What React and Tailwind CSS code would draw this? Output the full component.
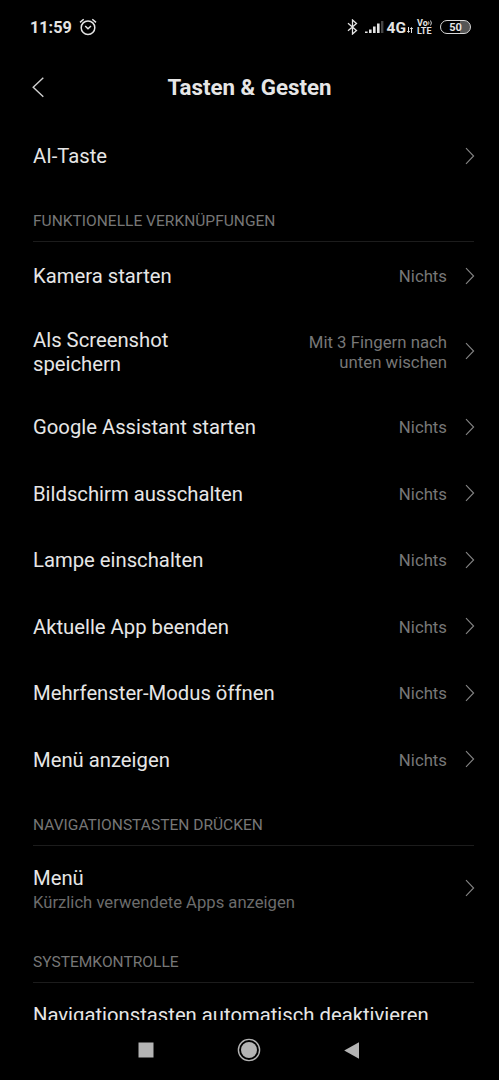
import React from "react";

const shortcuts = [
  { title: "Kamera starten", value: "Nichts" },
  { title: "Als Screenshot speichern", value: "Mit 3 Fingern nach unten wischen", tall: true },
  { title: "Google Assistant starten", value: "Nichts" },
  { title: "Bildschirm ausschalten", value: "Nichts" },
  { title: "Lampe einschalten", value: "Nichts" },
  { title: "Aktuelle App beenden", value: "Nichts" },
  { title: "Mehrfenster-Modus öffnen", value: "Nichts" },
  { title: "Menü anzeigen", value: "Nichts" },
];

const Chevron = () => (
  <svg className="-mr-px mb-px h-[18px] w-[10px] shrink-0" viewBox="0 0 10 18" fill="none" stroke="#858585" strokeWidth="1.1">
    <path d="M1 1.2 8.6 9 1 16.8" />
  </svg>
);

function Row({ title, value, subtitle, tall, arrow = true }) {
  return (
    <div className={`flex shrink-0 items-center ${tall || subtitle ? "h-[84.5px]" : "h-[66.45px]"}`}>
      <div className={`flex-1 ${subtitle ? "pt-1" : tall ? "pt-px" : ""}`}>
        <p className={`text-[20.25px] leading-6 text-[#e6e6e6] ${tall ? "max-w-[160px]" : "whitespace-nowrap"}`}>{title}</p>
        {subtitle && <p className="mt-px text-[16.65px] leading-6 text-[#6c6c6c]">{subtitle}</p>}
      </div>
      {value && <p className="mr-[18px] max-w-[142px] text-right text-[16.75px] leading-5 text-[#777]">{value}</p>}
      {arrow && <Chevron />}
    </div>
  );
}

function SectionTitle({ children }) {
  return <h2 className="h-[53px] shrink-0 border-b border-[#1c1c1c] pt-[22px] text-[15.55px] leading-5 text-[#767676]">{children}</h2>;
}

function StatusBar() {
  return (
    <div className="flex h-[54px] shrink-0 items-center pr-[28px] pl-[30px] text-[#e4e4e4]">
      <span className="pt-px text-[16.2px] leading-5 font-bold">11:59</span>
      <svg className="ml-[7px] h-[18px] w-[18px]" viewBox="0 0 18 18" fill="none" stroke="currentColor" strokeWidth="1.5">
        <circle cx="9" cy="9.7" r="6.8" />
        <path d="M1 4.4 4.7 1.2M17 4.4 13.3 1.2M6.2 8 9 10.7 12 8" />
      </svg>
      <div className="ml-auto flex items-center">
        <svg className="h-4 w-[11px]" viewBox="0 0 11 16" fill="none" stroke="currentColor" strokeWidth="1.3">
          <path d="M1 4.2 9.5 11.4 5.5 15V1L9.5 4.6 1 11.8" />
        </svg>
        <svg className="ml-[7px] h-[14px] w-[19px]" viewBox="0 0 19 14" fill="currentColor">
          <path d="M0 11.5h2.6V13H0zM4 9.5h2.6V13H4zM8 6.5h2.6V13H8zM12 3.5h2.6V13H12z" />
          <path d="M16 1h2.4v12H16z" opacity=".3" />
        </svg>
        <span className="ml-[3px] pt-px text-[15.5px] leading-5 font-bold">4G</span>
        <svg className="mt-[6px] ml-px h-[6px] w-[6px]" viewBox="0 0 6 6" fill="none" stroke="currentColor" strokeWidth="1">
          <path d="M1.5 0v5M.3 4l1.2 1.5L2.7 4M4.5 6V1M3.3 2 4.5.5 5.7 2" />
        </svg>
        <div className="ml-[4px] flex w-4 flex-col text-[9px] leading-[8px] font-bold">
          <span className="flex items-center">
            Vo
            <svg className="h-[6px] w-[5px]" viewBox="0 0 5 6" fill="none" stroke="currentColor" strokeWidth=".9">
              <path d="M.5 1.5q1 1.5 0 3M2.5.5q1.8 2.5 0 5" />
            </svg>
          </span>
          <span>LTE</span>
        </div>
        <div className="ml-[7px] flex h-[14px] w-[31px] items-center justify-center rounded-full border-[1.5px] border-[#d8d8d8] bg-linear-to-r from-black from-65% to-[#555] to-65% text-[11px] leading-none font-bold">50</div>
      </div>
    </div>
  );
}

function NavigationBar() {
  return (
    <div className="flex h-[60px] shrink-0 items-center justify-between pr-[139px] pl-[138px] text-[#b4b4b4]">
      <svg className="h-4 w-4" viewBox="0 0 16 16" fill="currentColor">
        <path d="M.5.5h15v15H.5z" />
      </svg>
      <svg className="h-6 w-6" viewBox="0 0 24 24" fill="none" stroke="currentColor">
        <circle cx="12" cy="12" r="10.6" strokeWidth="1.4" />
        <circle cx="12" cy="12" r="8" fill="currentColor" stroke="none" />
      </svg>
      <svg className="h-[17px] w-4" viewBox="0 0 16 17" fill="currentColor">
        <path d="M15 .3v16.4L.2 8.5z" />
      </svg>
    </div>
  );
}

export default function App() {
  return (
    <div className="flex h-[1080px] w-[499px] flex-col overflow-hidden bg-black font-[Roboto,sans-serif]">
      <StatusBar />
      <header className="grid h-[69px] shrink-0 grid-cols-[60px_1fr_60px] items-center pb-[4px]">
        <svg className="ml-[31px] h-[22px] w-[14px]" viewBox="0 0 14 22" fill="none" stroke="#d0d0d0" strokeWidth="1.4">
          <path d="M12.3 1.7 2.2 11.2 12.3 20.7" />
        </svg>
        <h1 className="text-center text-[22.3px] leading-7 font-bold text-[#e6e6e6]">Tasten &amp; Gesten</h1>
      </header>
      <main className="flex min-h-0 flex-1 flex-col overflow-hidden pr-[25px] pl-[33px]">
        <Row title="AI-Taste" />
        <SectionTitle>FUNKTIONELLE VERKNÜPFUNGEN</SectionTitle>
        <div className="pt-[0.8px]">
          {shortcuts.map((item) => (
            <Row key={item.title} {...item} />
          ))}
        </div>
        <SectionTitle>NAVIGATIONSTASTEN DRÜCKEN</SectionTitle>
        <Row title="Menü" subtitle="Kürzlich verwendete Apps anzeigen" />
        <SectionTitle>SYSTEMKONTROLLE</SectionTitle>
        <div className="-mt-[2px]">
          <Row title="Navigationstasten automatisch deaktivieren" arrow={false} />
        </div>
      </main>
      <NavigationBar />
    </div>
  );
}
